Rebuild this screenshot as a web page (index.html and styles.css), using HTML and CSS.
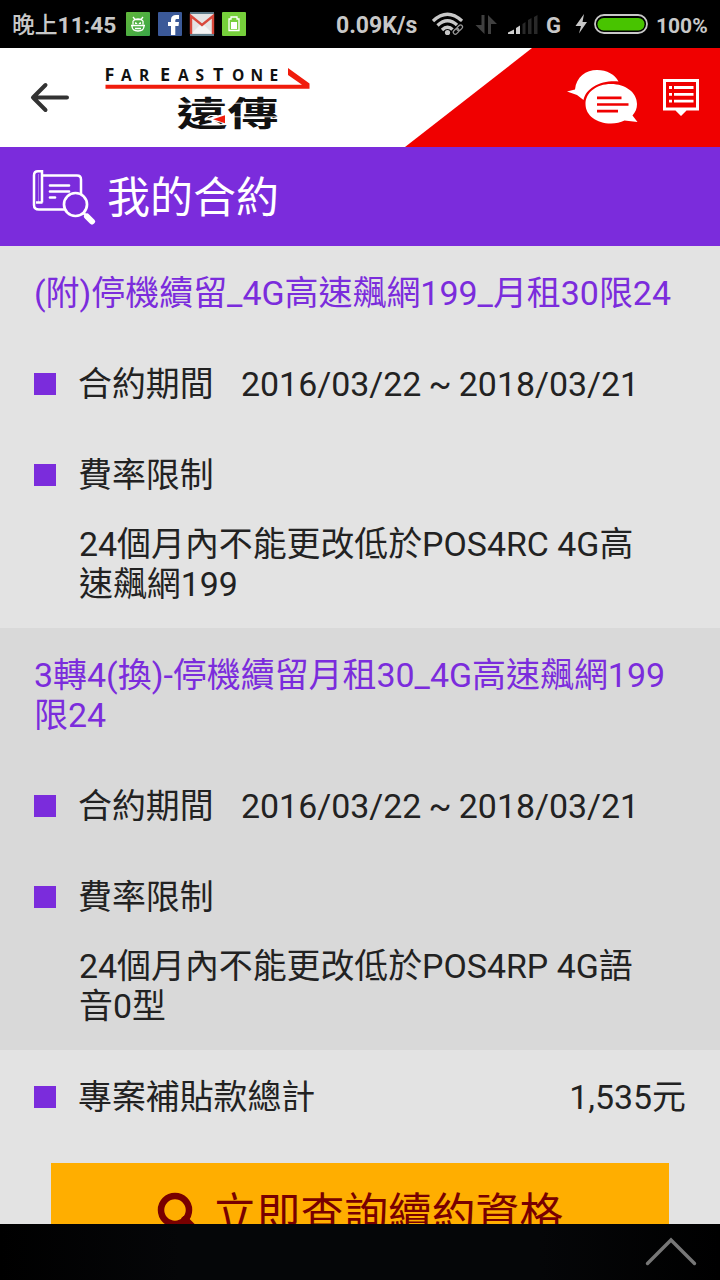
FILE: index.html
```html
<!DOCTYPE html>
<html lang="zh-Hant">
<head>
<meta charset="utf-8">
<title>我的合約</title>
<link rel="stylesheet" href="styles.css">
</head>
<body>
<div class="screen">
  <div class="status">
    <span class="status-time">晚上<b>11:45</b></span>
    <svg class="status-apps" width="120" height="24" viewBox="0 0 120 24">
      <defs><linearGradient id="green" x2="1" y2="1"><stop offset="0" stop-color="#62b63b"/><stop offset="1" stop-color="#3aa648"/></linearGradient></defs>
      <rect width="24" height="24" rx="1" fill="url(#green)"/>
      <path d="M7 5l2 2.500h6L17 5M7 9v3.500M17 9v3.500M5 13.500h14M6 14c0 3.500 2.500 5 6 5s6-1.500 6-5M7 9c1-1.500 3-2 5-2s4 .5 5 2M9 16.500h6" fill="none" stroke="#fff" stroke-width="1.300"/>
      <path d="M9 10l2.200 1v1H9zM15 10l-2.200 1v1H15z" fill="#fff"/>
      <rect x="32" width="24" height="24" rx="1" fill="#3b5998"/>
      <path d="M45 23v-9h-3v-4h3V7.500C45 4.500 47 3 50 3h3v4h-2c-1.200 0-1.700.5-1.700 1.500V10H53l-.5 4h-3.200v9z" fill="#fff"/>
      <rect x="64" width="24" height="24" fill="#607d8b"/>
      <rect x="64" y="2" width="24" height="20" fill="#e4e4e4"/>
      <path d="M66 21l8-8 2 1.500 2-1.500 8 8z" fill="#f4f4f4"/>
      <path d="M65 22V4l11 9L87 4v18" fill="none" stroke="#d9483b" stroke-width="2.400"/>
      <rect x="96" width="24" height="24" rx="1" fill="#76cf3b"/>
      <path d="M105 7V5h6v2h2v11.500h-10V7z" fill="none" stroke="#fff" stroke-width="1.300"/>
      <rect x="105" y="10" width="6" height="7" fill="#fff"/>
    </svg>
    <span class="status-speed">0.09K/s</span>
    <svg class="status-icons" width="106" height="26" viewBox="432 11 106 26">
      <g fill="none" stroke="#c8c8c8" stroke-width="3.300">
        <path d="M433 21Q447.500 7.500 462 21M437.500 25.500Q447.500 16 457.500 25.500M442 30Q447.500 24.500 453 30"/>
      </g>
      <circle cx="447.500" cy="32.500" r="2.600" fill="#c8c8c8"/>
      <path d="M453 34l10-10" stroke="#000" stroke-width="7"/>
      <g fill="none" stroke="#999" stroke-width="1.300"><rect x="453" y="29.500" width="6.500" height="4" rx="2" transform="rotate(-45 456 31.500)"/><rect x="456.500" y="26" width="6.500" height="4" rx="2" transform="rotate(-45 459.500 28)"/></g>
      <path d="M481.500 15h3v19l-9-9h6zM488 34V15l9 9h-6v10z" fill="#404040"/>
      <path d="M508 34v-1.500l6-3V34zM516 34v-6l4-2.500V34z" fill="#d0d0d0"/>
      <path d="M522.500 34V24l3-2v12zM528 34V20l3.500-2v16zM534 34V17l3.500-2v19z" fill="#292929"/>
    </svg>
    <span class="status-net">G</span>
    <svg class="status-battery" width="74" height="24" viewBox="575 12 74 24">
      <path d="M584 14l-8.500 12h5.500l-2 7.500L587 22h-4.500z" fill="#c8c8c8"/>
      <rect x="595" y="15" width="52" height="18" rx="9" fill="#000" stroke="#c8c8c8" stroke-width="1.800"/>
      <rect x="597.500" y="18" width="47" height="12.500" rx="6.200" fill="#48c400"/>
    </svg>
    <span class="status-percent">100%</span>
  </div>

  <header class="brand">
    <svg class="brand-art" width="720" height="99" viewBox="0 48 720 99" role="img" aria-label="FAREASTONE 遠傳">
      <path d="M532 48h188v99H405z" fill="#f00000"/>
      <path d="M45.500 85L33 97.500 45.500 110M33 97.500h34" fill="none" stroke="#333" stroke-width="4" stroke-linecap="round" stroke-linejoin="round"/>
      <g class="wordmark">
        <text y="81"><tspan class="cap" x="104.500">F</tspan><tspan x="121 139">AR</tspan><tspan class="cap" x="160">E</tspan><tspan x="178 195.500">AS</tspan><tspan class="cap" x="213">T</tspan><tspan x="232 250.500 269.500">ONE</tspan></text>
      </g>
      <path d="M105.500 84.800H302L288 75v-7l21.500 15.500v5.300h-204z" fill="#f01c0c"/>
      <g class="hanzi" transform="translate(176.500 125.500) scale(1.5 1)"><text>遠傳</text></g>
      <path d="M177 103.200h50M234 103.200h45M234 116.800h45" stroke="#fff" stroke-width=".8"/>
      <path d="M204 119.200l21-5.700v10z" fill="#fff"/>
      <path d="M213 119.200l12-4v8z" fill="#f01c0c"/>
      <path d="M567 91.500l8-2C576 77 586 70 597 70c10 0 18 4.500 21.500 11.500C601 80 586 88 583.500 100l-6.500-5z" fill="#fff"/>
      <path d="M611 84c14.500 0 26 8.500 26 20 0 4.500-1.500 8-4.500 11.500l5 6.500-13-1.500c-4 2-8.500 3-13.500 3-14.500 0-25.500-8-25.500-19.500S596.500 84 611 84z" fill="#fff"/>
      <path d="M597 97.800h24.500M597 104.500h31.500M597 111.200h21" stroke="#f00000" stroke-width="2.700"/>
      <path d="M663 79h36v31.500h-12.500L681 116l-5.500-5.500H663z" fill="#fff"/>
      <rect x="666" y="82" width="30" height="25.500" fill="#f00000"/>
      <path d="M669 87.500h3M674 87.500h19.500M669 94.300h3M674 94.300h19.500M669 101.200h3M674 101.200h19.500" stroke="#fff" stroke-width="2.800"/>
    </svg>
  </header>

  <div class="page-title">
    <svg width="64" height="56" viewBox="32 169 64 56" fill="none" stroke="#fff" stroke-width="2.500">
      <path d="M42 202.500v-31.300H38q-4 0-4 4V205q0 4.500 5 4.500h27M42 175.500H77q4 0 4 4v15M36 202.500h6.500"/>
      <path d="M38.500 174v28" stroke-width="1" opacity=".35"/>
      <path d="M50 185.500h19M50 191.500h19M50 197.500h5" stroke-width="2.700" stroke-linecap="round"/>
      <circle cx="75.500" cy="204.500" r="11.500" fill="#7b2cdc" stroke-width="2.700"/>
      <path d="M83 212.500l3 3"/><path d="M87 216.500l5 5" stroke-width="6" stroke-linecap="round"/>
    </svg>
    <h1>我的合約</h1>
  </div>

  <main>
    <section class="contract">
      <h2>(附)停機續留_4G高速飆網199_月租30限24</h2>
      <div class="row"><span class="label">合約期間</span><span class="period">2016/03/22 ~ 2018/03/21</span></div>
      <div class="row"><span class="label">費率限制</span></div>
      <p>24個月內不能更改低於POS4RC 4G高<br>速飆網199</p>
    </section>
    <section class="contract alt">
      <h2>3轉4(換)-停機續留月租30_4G高速飆網199<br>限24</h2>
      <div class="row"><span class="label">合約期間</span><span class="period">2016/03/22 ~ 2018/03/21</span></div>
      <div class="row"><span class="label">費率限制</span></div>
      <p>24個月內不能更改低於POS4RP 4G語<br>音0型</p>
    </section>
    <section class="total">
      <div class="row"><span class="label">專案補貼款總計</span><span class="amount">1,535元</span></div>
      <div class="action">
        <svg width="46" height="46" viewBox="0 0 46 46" fill="none" stroke="#780000"><circle cx="18" cy="18" r="14" stroke-width="6.500"/><path d="M28 28l12 12" stroke-width="8" stroke-linecap="round"/></svg>
        <span>立即查詢續約資格</span>
      </div>
    </section>
  </main>

  <div class="toolbar">
    <svg width="52" height="30" viewBox="0 0 52 30"><path d="M2.500 26.500L26 3l23.500 23.500" fill="none" stroke="#777" stroke-width="3.400" stroke-linecap="round"/></svg>
  </div>
</div>
</body>
</html>
```

FILE: styles.css
```css
* { box-sizing: border-box; }
body {
  margin: 0;
  font-family: Roboto, "Noto Sans CJK TC", sans-serif;
  color: #222;
}
h1, h2, p { margin: 0; font-weight: 400; }
svg { display: block; flex: none; }
.screen {
  width: 720px;
  height: 1280px;
  display: flex;
  flex-direction: column;
  overflow: hidden;
  background: #e3e3e3;
}
.status {
  height: 48px;
  flex: none;
  display: flex;
  align-items: center;
  background: #000;
  color: #c8c8c8;
  font-size: 23px;
  font-weight: 700;
  line-height: 44px;
  white-space: nowrap;
  padding-left: 12px;
}
.status span { padding-top: 3px; }
.status-time { width: 114px; font-size: 22.800px; font-weight: 500; }
.status-time b { font-weight: 700; }
.status-apps { margin-right: 90px; }
.status-speed { width: 96px; }
.status-net { width: 29px; margin-left: 8px; font-size: 22px; }
.status-percent { margin-left: 7px; font-size: 21px; }
.brand { height: 99px; flex: none; background: #fff; }
.wordmark { font-family: "Open Sans", sans-serif; font-size: 15.5px; font-weight: 700; fill: #111; }
.wordmark .cap { font-size: 18px; }
.hanzi { font-family: "Noto Sans CJK TC", sans-serif; font-size: 34px; font-weight: 700; fill: #111; }
.page-title {
  height: 99px;
  flex: none;
  display: flex;
  align-items: center;
  gap: 11px;
  padding-left: 32px;
  background: #7b2cdc;
  color: #fff;
}
.page-title h1 { padding-top: 3px; font-size: 43px; line-height: 60px; }
main {
  flex: 1;
  min-height: 0;
  overflow: hidden;
  font-size: 33.9px;
  line-height: 40px;
  white-space: nowrap;
}
.contract { padding: 28px 34px 23px; }
.alt { background: #d9d9d9; }
.contract h2 { font-size: 33.95px; line-height: 40px; color: #7b2cdc; }
.contract p { margin: 29px 0 0 45px; }
.row { display: flex; align-items: center; height: 40px; }
.row::before {
  content: "";
  width: 22px;
  height: 22px;
  margin: 0 22px 2px 0;
  background: #7b2cdc;
}
.contract .row { margin-top: 51px; }
.contract .label { width: 163px; }
.period { word-spacing: -1.2px; }
.total { padding: 28px 34px 0; }
.amount { margin-left: auto; }
.action {
  height: 103px;
  margin: 45px 17px 0;
  display: flex;
  align-items: center;
  justify-content: center;
  gap: 10px;
  background: #ffae00;
  color: #780000;
  font-size: 43.8px;
}
.action span { padding-top: 1px; }
.toolbar {
  height: 56px;
  flex: none;
  display: flex;
  align-items: center;
  justify-content: flex-end;
  padding-right: 23px;
  background: linear-gradient(90deg, #000, #050608 25%, #050608 75%, #000);
}
```
